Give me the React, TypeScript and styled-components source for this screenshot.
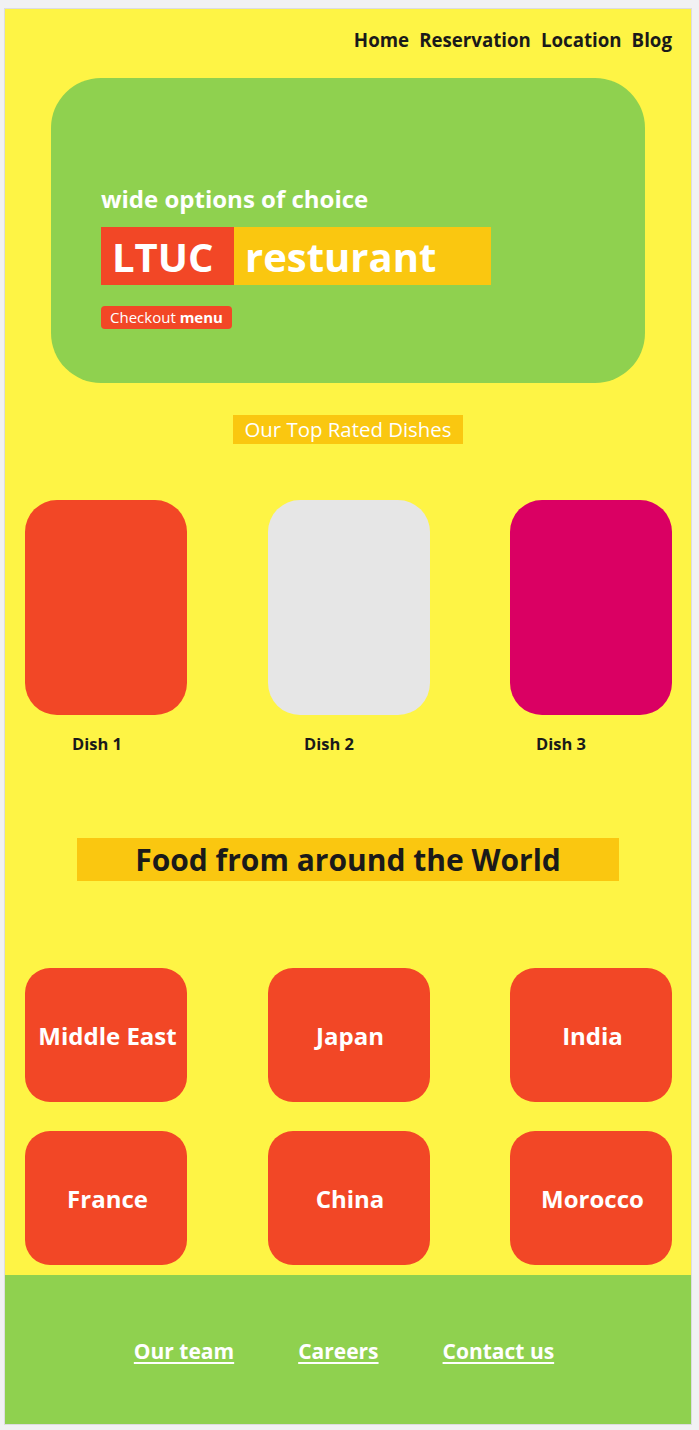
import React from "react"
import styled, { createGlobalStyle } from "styled-components"

const GlobalStyle = createGlobalStyle`
  html, body {
    margin: 0;
    padding: 0;
    background-color: #f1f1f3;
    font-family: "Open Sans", "Liberation Sans", sans-serif;
  }
`

const Frame = styled.div`
  margin: 9px 8px 6px 5px;
  background-color: #fef445;
  box-shadow: 0 0 0 1px #dcdcdf;
  display: flex;
  flex-direction: column;
`

const Nav = styled.nav`
  display: flex;
  justify-content: flex-end;
  gap: 10px;
  padding: 19px 19px 0 0;
`

const NavLink = styled.a`
  font-size: 18.7px;
  line-height: 24px;
  font-weight: 700;
  color: #1a1a1a;
  text-decoration: none;
`

const Hero = styled.section`
  margin: 26px 46px 0;
  height: 305px;
  box-sizing: border-box;
  background-color: #8fd14f;
  border-radius: 50px;
  padding: 105px 0 0 50px;
  display: flex;
  flex-direction: column;
  align-items: flex-start;
`

const Tagline = styled.h2`
  margin: 0;
  font-size: 24px;
  line-height: 32px;
  font-weight: 700;
  color: #ffffff;
`

const TitleRow = styled.div`
  display: flex;
  margin-top: 12px;
`

const TitleBlock = styled.span<{ $bg: string; $width: number }>`
  display: flex;
  align-items: center;
  box-sizing: border-box;
  width: ${(p) => p.$width}px;
  height: 58px;
  padding-left: 11px;
  background-color: ${(p) => p.$bg};
  color: #ffffff;
  font-size: 40px;
  font-weight: 700;
`

const CheckoutButton = styled.button`
  margin-top: 21px;
  width: 131px;
  height: 23px;
  padding: 0;
  border: none;
  border-radius: 4px;
  background-color: #f24726;
  color: #ffffff;
  font-family: inherit;
  font-size: 15px;
  line-height: 23px;
  b {
    font-weight: 700;
  }
`

const SectionLabel = styled.h3`
  align-self: center;
  margin: 32px 0 0;
  width: 230px;
  height: 29px;
  line-height: 29px;
  text-align: center;
  background-color: #fac710;
  color: #ffffff;
  font-size: 20.4px;
  font-weight: 400;
`

const CardRow = styled.div<{ $top: number }>`
  display: flex;
  justify-content: space-between;
  padding: 0 19px 0 20px;
  margin-top: ${(p) => p.$top}px;
`

const DishCard = styled.div<{ $bg: string }>`
  width: 162px;
  height: 215px;
  border-radius: 32px;
  background-color: ${(p) => p.$bg};
`

const DishLabels = styled.div`
  display: grid;
  grid-template-columns: 232px 232px auto;
  padding-left: 67px;
  margin-top: 18px;
`

const DishLabel = styled.span`
  font-size: 16.5px;
  line-height: 22px;
  font-weight: 700;
  color: #1a1a1a;
`

const WorldBanner = styled.h2`
  align-self: center;
  margin: 83px 0 0;
  width: 542px;
  height: 43px;
  line-height: 43px;
  text-align: center;
  background-color: #fac710;
  color: #1a1a1a;
  font-size: 30px;
  font-weight: 700;
`

const CountryCard = styled.div`
  width: 162px;
  height: 134px;
  box-sizing: border-box;
  padding-left: 3px;
  border-radius: 25px;
  background-color: #f24726;
  display: flex;
  align-items: center;
  justify-content: center;
  color: #ffffff;
  font-size: 24px;
  font-weight: 700;
`

const Footer = styled.footer`
  margin-top: 10px;
  height: 149px;
  background-color: #8fd14f;
  display: flex;
  align-items: center;
  justify-content: center;
  gap: 64px;
  padding-right: 8px;
  padding-top: 2px;
  box-sizing: border-box;
`

const FooterLink = styled.a`
  color: #ffffff;
  font-size: 21px;
  font-weight: 700;
  text-decoration: underline;
  text-underline-offset: 3px;
`

const dishes = [
  { name: "Dish 1", color: "#f24726" },
  { name: "Dish 2", color: "#e6e6e6" },
  { name: "Dish 3", color: "#da0063" },
]

const countries = [
  ["Middle East", "Japan", "India"],
  ["France", "China", "Morocco"],
]

const App = () => {
  return (
    <>
      <GlobalStyle />
      <Frame>
        <Nav>
          <NavLink href="#">Home</NavLink>
          <NavLink href="#">Reservation</NavLink>
          <NavLink href="#">Location</NavLink>
          <NavLink href="#">Blog</NavLink>
        </Nav>
        <Hero>
          <Tagline>wide options of choice</Tagline>
          <TitleRow>
            <TitleBlock $bg="#f24726" $width={133}>LTUC</TitleBlock>
            <TitleBlock $bg="#fac710" $width={257}>resturant</TitleBlock>
          </TitleRow>
          <CheckoutButton>
            Checkout <b>menu</b>
          </CheckoutButton>
        </Hero>
        <SectionLabel>Our Top Rated Dishes</SectionLabel>
        <CardRow $top={56}>
          {dishes.map((d) => (
            <DishCard key={d.name} $bg={d.color} />
          ))}
        </CardRow>
        <DishLabels>
          {dishes.map((d) => (
            <DishLabel key={d.name}>{d.name}</DishLabel>
          ))}
        </DishLabels>
        <WorldBanner>Food from around the World</WorldBanner>
        {countries.map((row, i) => (
          <CardRow key={i} $top={i === 0 ? 87 : 29}>
            {row.map((c) => (
              <CountryCard key={c}>{c}</CountryCard>
            ))}
          </CardRow>
        ))}
        <Footer>
          <FooterLink href="#">Our team</FooterLink>
          <FooterLink href="#">Careers</FooterLink>
          <FooterLink href="#">Contact us</FooterLink>
        </Footer>
      </Frame>
    </>
  )
}

export default App
